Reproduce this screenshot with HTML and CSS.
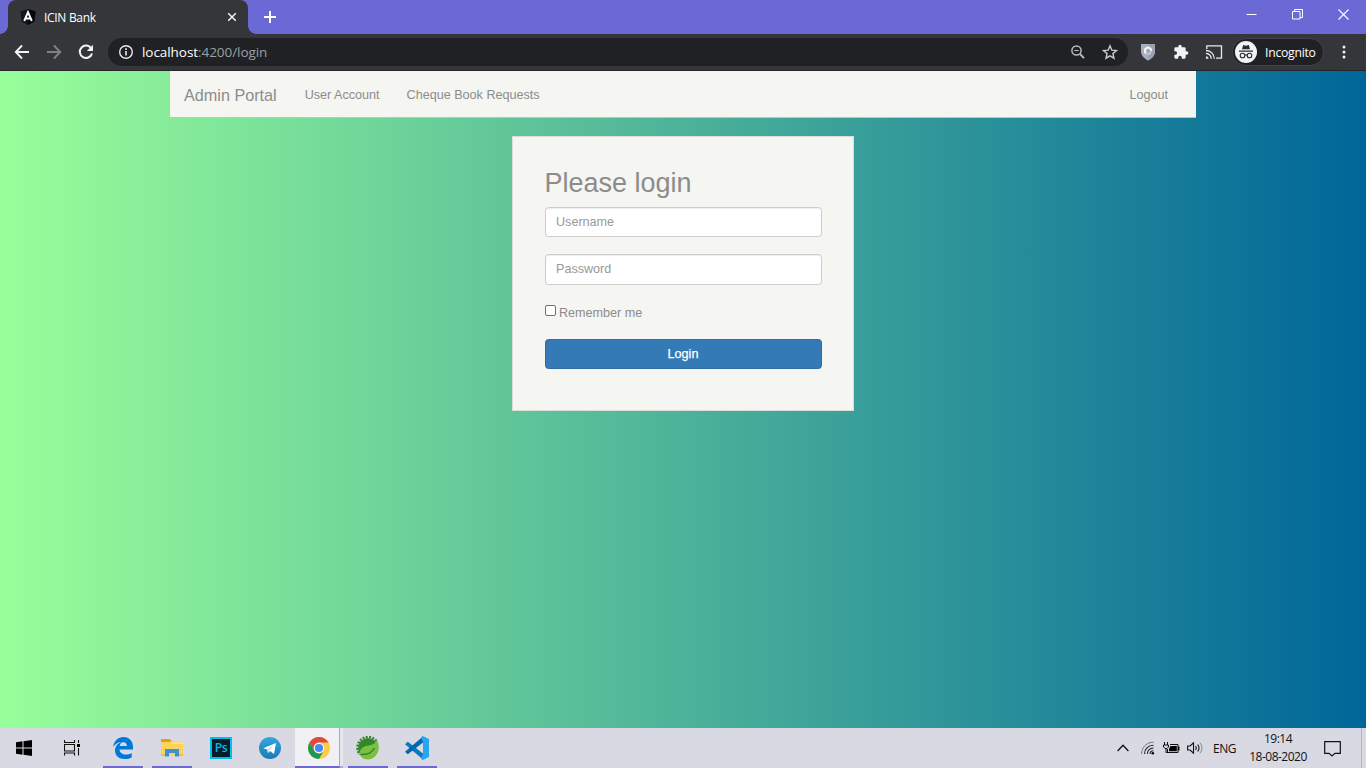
FILE: index.html
```html
<!DOCTYPE html>
<html lang="en">
<head>
<meta charset="utf-8">
<title>ICIN Bank</title>
<link rel="stylesheet" href="styles.css">
</head>
<body>
<header class="tabstrip">
  <div class="tab">
    <svg class="favicon" width="16" height="16" viewBox="0 0 16 16"><path d="M8 0l7.5 2.6-1.1 9.9L8 16l-6.400-3.500L.5 2.600z" fill="#10141f"/><path d="M8 0v16l6.400-3.500 1.100-9.900z" fill="#05070c"/><path d="M4.200 12L8 3.200l3.800 8.800M5.500 9.500h5" fill="none" stroke="#fff" stroke-width="1.900"/></svg>
    <span class="tab-title">ICIN Bank</span>
    <svg class="tab-close" width="10" height="10" viewBox="0 0 10 10"><path d="M1.200 1.200l7.600 7.600M8.800 1.200L1.200 8.800" stroke="#f1f3f4" stroke-width="1.500"/></svg>
  </div>
  <svg class="new-tab" width="12" height="12" viewBox="0 0 12 12"><path d="M6 0v12M0 6h12" stroke="#fff" stroke-width="2"/></svg>
  <div class="window-controls">
    <svg width="11" height="11" viewBox="0 0 11 11"><path d="M.5 5.500h10" stroke="#fff"/></svg>
    <svg width="11" height="11" viewBox="0 0 11 11"><path d="M.5 2.500h7.500v7.500H.5zM2.500 2.500v-2h8v8H8" fill="none" stroke="#fff"/></svg>
    <svg width="11" height="11" viewBox="0 0 11 11"><path d="M.5.5l10 10M10.500.5l-10 10" stroke="#fff" stroke-width="1.100"/></svg>
  </div>
</header>
<div class="toolbar">
  <svg class="nav-icon" width="16" height="16" viewBox="0 0 16 16"><path d="M15 8H2M8 1.500L1.800 8 8 14.500" fill="none" stroke="#f1f3f4" stroke-width="1.900"/></svg>
  <svg class="nav-icon" width="16" height="16" viewBox="0 0 16 16"><path d="M1 8h13M8 1.500L14.200 8 8 14.500" fill="none" stroke="#7f8184" stroke-width="1.900"/></svg>
  <svg class="nav-icon" width="16" height="16" viewBox="0 0 16 16"><path d="M13.300 4.500A6.200 6.200 0 1 0 14 9.500" fill="none" stroke="#f1f3f4" stroke-width="2"/><path d="M15 .8v6.200H8.800z" fill="#f1f3f4"/></svg>
  <div class="omnibox">
    <svg width="16" height="16" viewBox="0 0 16 16"><circle cx="8" cy="8" r="6.300" fill="none" stroke="#e8eaed" stroke-width="1.400"/><path d="M8 7v4.500M8 4.300v1.700" stroke="#e8eaed" stroke-width="1.600"/></svg>
    <span class="url"><b>localhost</b>:4200/login</span>
    <svg class="zoom-icon" width="16" height="16" viewBox="0 0 16 16"><circle cx="6.500" cy="6.500" r="4.600" fill="none" stroke="#b8babd" stroke-width="1.500"/><path d="M10 10l4 4.200" stroke="#b8babd" stroke-width="1.900"/><path d="M4.300 6.500h4.400" stroke="#b8babd" stroke-width="1.100"/></svg>
    <svg width="16" height="16" viewBox="0 0 16 16"><path d="M8 1.800l1.800 4.300 4.700.4-3.600 3.100 1.100 4.600L8 11.800l-4 2.400 1.100-4.600-3.600-3.100 4.700-.4z" fill="none" stroke="#c7c9cc" stroke-width="1.400"/></svg>
  </div>
  <svg class="ext shield" width="16" height="18" viewBox="0 0 16 18"><path d="M1 1h14v7c0 4.500-3 7.500-7 9.500-4-2-7-5-7-9.500z" fill="#a9aebb"/><path d="M8 1h7v7c0 4.500-3 7.500-7 9.500z" fill="#9ba2b1"/><path d="M6.200 10.500A3.200 3.200 0 1 1 11.200 8" fill="none" stroke="#f5f6f8" stroke-width="2"/><path d="M11 8.500q-1 2.500-3.500 3.200" fill="none" stroke="#ccd1da" stroke-width="1.600"/></svg>
  <svg class="ext" width="16" height="16" viewBox="0 0 24 24"><path d="M20.500 11H19V7a2 2 0 0 0-2-2h-4V3.500a2.500 2.500 0 0 0-5 0V5H4a2 2 0 0 0-2 2v3.800h1.500a2.700 2.700 0 0 1 0 5.400H2V20a2 2 0 0 0 2 2h3.800v-1.500a2.700 2.700 0 0 1 5.400 0V22H17a2 2 0 0 0 2-2v-4h1.500a2.500 2.500 0 0 0 0-5z" fill="#f1f3f4"/></svg>
  <svg class="ext cast" width="18" height="16" viewBox="0 0 18 16"><path d="M1.800 5V1.900h14.700v12.200H11" fill="none" stroke="#e8eaed" stroke-width="1.300"/><path d="M1 6.500A8 8 0 0 1 9.200 14.700M1 9.500a5 5 0 0 1 5.200 5.200" fill="none" stroke="#e8eaed" stroke-width="1.300"/><path d="M1 12.200v2.500h2.500A2.500 2.500 0 0 0 1 12.200" fill="#e8eaed"/></svg>
  <div class="incognito">
    <svg width="22" height="22" viewBox="0 0 22 22"><circle cx="11" cy="11" r="11" fill="#f1f3f4"/><path d="M7 8.300l1.200-4.300 2.800.7 2.800-.7L15 8.300zM4 9.500h14v1.200H4z" fill="#2b2c30"/><g fill="none" stroke="#2b2c30" stroke-width="1.100"><circle cx="7.500" cy="14.500" r="2.300"/><circle cx="14.500" cy="14.500" r="2.300"/><path d="M9.700 14.300q1.300-1 2.600 0"/></g></svg>
    <span>Incognito</span>
  </div>
  <svg class="menu" width="4" height="14" viewBox="0 0 4 14"><g fill="#f1f3f4"><circle cx="2" cy="2" r="1.500"/><circle cx="2" cy="7" r="1.500"/><circle cx="2" cy="12" r="1.500"/></g></svg>
</div>
<main class="page">
  <nav class="navbar">
    <a class="brand">Admin Portal</a>
    <a class="nav-link">User Account</a>
    <a class="nav-link">Cheque Book Requests</a>
    <a class="nav-link logout">Logout</a>
  </nav>
  <form class="login-card">
    <h2>Please login</h2>
    <input class="field" type="text" placeholder="Username">
    <input class="field password" type="password" placeholder="Password">
    <label class="remember"><input class="check" type="checkbox"><span>Remember me</span></label>
    <button class="submit" type="button">Login</button>
  </form>
</main>
<footer class="taskbar">
  <div class="task start"><svg width="16" height="16" viewBox="0 0 16 16"><path d="M0 2.300L6.500 1.300v6.200H0zM7.500 1.200L16 0v7.500H7.500zM0 8.500h6.500v6.200L0 13.700zM7.500 8.500H16V16l-8.500-1.200z"/></svg></div>
  <div class="task view"><svg width="16" height="16" viewBox="0 0 16 16"><path d="M.5 0v2.500h10V0M.5 15.500V13h10v2.500M.5 4.500h10v6.500H.5zM14.500 0v3M14.500 8v7.500" fill="none" stroke="#111" stroke-width="1.100"/><path d="M13 4h3v3h-3z"/></svg></div>
  <div class="task open"><svg width="22" height="22" viewBox="0 0 22 22"><path d="M1 10C2 4 6 0 11.500 0 17.500 0 21 4.500 21 10v2.500H7.500c.2 3.500 3 5 6.200 5 2.300 0 4.300-.6 6-1.600v4.500c-2 1.100-4.300 1.600-7 1.600C7 22 3 18.500 3 13.500 3 9.500 5.500 6.500 9 5 5.500 5.200 2.500 7.500 1 10zm6.700-1h7.200c0-2.500-1.300-3.800-3.500-3.800S8 6.700 7.700 9z" fill="#0078d7"/></svg></div>
  <div class="task open"><svg width="22" height="20" viewBox="0 0 22 20"><path d="M0 1h9l1.500 2H22v15H0z" fill="#ffd25c"/><path d="M0 1h9l1.500 2L9 4H0z" fill="#e3a008"/><path d="M10 4h12v2H10z" fill="#ffe08a"/><path d="M4 18.500V11h14v7.500h-4V15H8v3.500z" fill="#3993d6"/><path d="M0 16h4v2H0zM18 16h4v2h-4z" fill="#f5bd3d"/></svg></div>
  <div class="task"><div class="ps">Ps</div></div>
  <div class="task"><svg width="22" height="22" viewBox="0 0 22 22"><defs><linearGradient id="tg" x2="0" y2="1"><stop stop-color="#32a8df"/><stop offset="1" stop-color="#1b79b5"/></linearGradient></defs><circle cx="11" cy="11" r="11" fill="url(#tg)"/><path d="M4.200 11.200L17 6l-2 11-4-3-2 2-.8-3.600z" fill="#fff"/><path d="M8.200 12.400L14.500 8.500l-4.500 4.800L9 16z" fill="#b8d8e9"/></svg></div>
  <div class="task active"><svg width="22" height="22" viewBox="0 0 22 22"><circle cx="11" cy="11" r="11" fill="#ffcd42"/><path d="M1.500 5.500A11 11 0 0 1 20.500 5.500H11a5.500 5.500 0 0 0-4.800 8z" fill="#dc4b3e"/><path d="M1.500 5.500A11 11 0 0 0 11 22l4.800-8.200a5.500 5.500 0 0 1-9.500 0z" fill="#189b58"/><circle cx="11" cy="11" r="5.200" fill="#f4f5f7"/><circle cx="11" cy="11" r="4.100" fill="#4788f4"/></svg></div>
  <div class="stack"></div>
  <div class="task open spring"><svg width="24" height="24" viewBox="0 0 24 24"><path d="M20.500 5A10.700 10.700 0 0 0 3.800 18.500" fill="none" stroke="#37852c" stroke-width="2.400" stroke-dasharray="2 1.300"/><circle cx="12" cy="12" r="10" fill="#37852c"/><path d="M4 19C3 12 8 10 13 9.500 17 9 19.500 7 21 4c5 10-1 19.500-9 19.500C8.500 23.500 5.500 22 4 19z" fill="#7ac142"/><path d="M4.500 18.500c5 .5 11-1 14-6.500" fill="none" stroke="#35802d" stroke-width="1.500"/></svg></div>
  <div class="task open"><svg width="24" height="24" viewBox="0 0 24 24"><path d="M0 8.200l2.800-2.400L18 17.500v6z" fill="#087abf"/><path d="M0 15.800l2.800 2.400L18 6.500v-6z" fill="#0069ae"/><path d="M17.800 0L24 3v18l-6.200 3-2-1.500L18 18V6l-2.200-4.500z" fill="#29a4ee"/></svg></div>
  <div class="tray">
    <svg class="chevron" width="12" height="8" viewBox="0 0 12 8"><path d="M.6 7L6 1.300 11.400 7" fill="none" stroke="#111" stroke-width="1.300"/></svg>
    <svg class="wifi" width="14" height="14" viewBox="0 0 14 14"><g fill="none" stroke="#222"><path d="M.6 13C.6 6 6 1.200 12.500 1.200" stroke="#777"/><path d="M3.500 13C3.500 8 7.500 4.200 12.500 4.200M6.300 13C6.300 9.500 9 7 12.500 7M9 13c0-2 1.500-3.300 3.500-3.300" stroke-width="1.100"/></g><circle cx="11.800" cy="12.300" r="1.300"/></svg>
    <svg class="battery" width="17" height="12" viewBox="0 0 17 12"><path d="M1.500 0v3M4.500 0v3M.5 3h5v2L4 6.500H2L.5 5zM3 6v4.500h2" fill="none" stroke="#111"/><path d="M7 2.500h8v8H4.500V7" fill="none" stroke="#111"/><path d="M7.500 4h6.300v5.200H6V7zM15 4.500h1.500v4H15z"/></svg>
    <svg class="sound" width="17" height="12" viewBox="0 0 17 12"><path d="M.6 4h2.500L6.500.8v10.400L3.100 8H.6zM8.500 4q1.500 2 0 4M10.700 2.500q2.600 3.500 0 7" fill="none" stroke="#111" stroke-width="1.100"/><path d="M13 .8q4 5.200 0 10.400" fill="none" stroke="#888"/></svg>
    <span class="lang">ENG</span>
    <div class="clock"><span>19:14</span><span class="date">18-08-2020</span></div>
    <svg class="notice" width="17" height="17" viewBox="0 0 17 17"><path d="M.7 1.700h15.600v11.600h-5.300L8 16l-3-2.700H.7z" fill="none" stroke="#111" stroke-width="1.200"/></svg>
    <div class="desktop-edge"></div>
  </div>
</footer>
</body>
</html>
```
FILE: styles.css
```css
* { box-sizing: border-box; }
body { margin: 0; width: 1366px; height: 768px; overflow: hidden; display: flex; flex-direction: column; font-family: "Open Sans", "Noto Sans", sans-serif; font-size: 12px; }
svg { display: block; flex: none; }
.tabstrip { height: 34px; flex: none; background: #6b69d6; display: flex; align-items: flex-start; padding-left: 8px; }
.tab { position: relative; width: 240px; height: 34px; background: #35363a; border-radius: 8px 8px 0 0; display: flex; align-items: center; padding: 0 11px 0 12px; color: #fff; }
.tab::before, .tab::after { content: ""; position: absolute; bottom: 0; width: 8px; height: 8px; }
.tab::before { left: -8px; background: radial-gradient(circle at 0 0, #6b69d6 7.5px, #35363a 8px); }
.tab::after { right: -8px; background: radial-gradient(circle at 100% 0, #6b69d6 7.5px, #35363a 8px); }
.tab-title { margin-left: 8px; font-size: 12px; letter-spacing: -.3px; }
.tab-close { margin-left: auto; }
.new-tab { margin: 11px 0 0 16px; }
.window-controls { display: flex; gap: 35px; margin: 9px 17px 0 auto; }
.toolbar { height: 37px; flex: none; background: #35363a; border-bottom: 1px solid #252629; display: flex; align-items: center; padding-left: 14px; }
.nav-icon { margin-right: 16px; }
.omnibox { width: 1020px; height: 28px; margin-left: -2px; border-radius: 14px; background: #202124; display: flex; align-items: center; padding: 0 10px; }
.url { margin-left: 8px; color: #9aa0a6; font-size: 13.5px; letter-spacing: -.06px; }
.url b { font-weight: 400; color: #fff; }
.zoom-icon { margin: 0 16px 0 auto; }
.ext { margin-left: 17px; }
.shield { margin-left: 12px; }
.cast { margin-left: 16px; }
.incognito { width: 92px; height: 28px; margin-left: 9px; border: 1px solid #414246; border-radius: 14px; background: #202124; color: #fff; display: flex; align-items: center; padding-left: 2px; gap: 8px; font-size: 12.2px; letter-spacing: -.25px; }
.incognito span { white-space: nowrap; }
.menu { margin-left: 18px; }
.page { flex: 1; background: linear-gradient(to right, #99ff99, #006699); display: flex; flex-direction: column; align-items: center; font-family: "Liberation Sans", Arial, sans-serif; font-size: 12.6px; color: #8c8c8c; }
.navbar { width: 1026px; height: 47px; background: #f5f5f1; border-bottom: 1px solid #bcc6be; display: flex; align-items: center; padding: 0 28px 0 14px; }
.brand { font-size: 16.2px; margin-right: 28px; padding-top: 2px; }
.nav-link { margin-right: 27px; padding-top: 2px; font-size: 12.6px; }
.nav-link.logout { margin: 0 0 0 auto; }
.login-card { width: 342px; height: 275px; margin-top: 18px; background: #f5f5f1; border: 1px solid #dcdcd8; padding: 31px 31px 0 32px; display: flex; flex-direction: column; }
.login-card h2 { font-size: 27px; line-height: 30px; font-weight: 400; margin: 0 0 9px -.5px; }
.field { width: 277px; height: 30px; border: 1px solid #ccc; border-radius: 3.5px; background: #fff; padding: 0 10px 1px; font-family: inherit; font-size: 12.6px; box-shadow: inset 0 1px 1px rgba(0, 0, 0, .075); }
.field::placeholder { color: #999; opacity: 1; }
.password { height: 31px; margin-top: 17px; padding-bottom: 2px; }
.remember { height: 16px; margin-top: 20px; display: flex; }
.check { appearance: none; width: 11px; height: 11px; margin: 0 3px 0 0; border: 1px solid #707070; border-radius: 2px; background: #fff; }
.remember span { line-height: 16px; }
.submit { width: 277px; height: 30px; margin-top: 18px; padding: 0 1px 1px 0; border: 1px solid #2e6da4; border-radius: 3.5px; background: #337ab7; color: #fff; font-family: inherit; font-size: 12.6px; -webkit-text-stroke: .25px #fff; }
.taskbar { height: 40px; flex: none; background: #d9d9e4; display: flex; color: #111; }
.task { width: 40px; height: 40px; margin-right: 9px; display: flex; align-items: center; justify-content: center; }
.task.start { width: 48px; margin: 0; }
.task.view { width: 48px; margin-right: 7px; }
.task.open { border-bottom: 2px solid #6b69d6; padding-top: 2px; }
.task.active { width: 45px; margin: 0 0 0 -4px; padding: 2px 0 0 3px; background: #f0f0f5; border-bottom: 2px solid #6b69d6; border-right: 1px solid #aaaab8; }
.stack { width: 3px; background: #e5e5ed; border-bottom: 2px solid #aaa8df; }
.task.spring { margin-left: 5px; }
.ps { width: 22px; height: 22px; border: 2px solid #00bfee; background: #061c28; color: #00b8ea; font-size: 12px; line-height: 17px; text-align: center; letter-spacing: -.3px; font-weight: 600; }
.tray { margin-left: auto; display: flex; align-items: center; }
.wifi { margin-left: 12px; }
.battery { margin-left: 8px; }
.sound { margin-left: 7px; }
.lang { width: 24px; margin-left: 9px; font-size: 12px; letter-spacing: -.5px; }
.clock { width: 60px; margin-left: 11px; display: flex; flex-direction: column; align-items: center; line-height: 18px; margin-top: -1px; letter-spacing: -.5px; }
.date { white-space: nowrap; }
.notice { margin-left: 16px; }
.desktop-edge { width: 5px; height: 40px; margin-left: 20px; border-left: 1px solid #b2b2be; }
```
